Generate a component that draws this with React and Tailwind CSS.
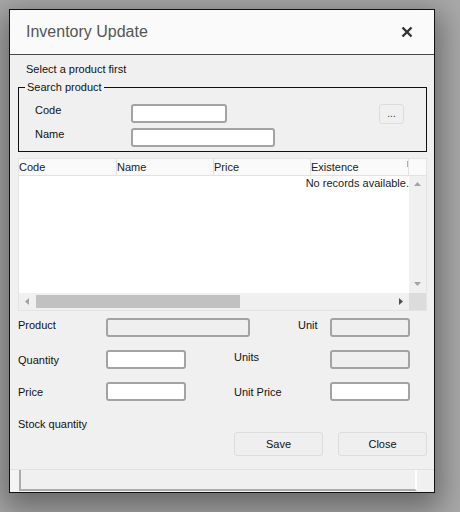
const inputBase = "h-[19px] border-2 border-[#a3a3a3] rounded-[3px]";

const Field = ({ width, disabled }) => (
  <div
    className={`${inputBase} ${width} ${disabled ? "bg-[#efefef]" : "bg-white"}`}
  />
);

const columns = [
  { name: "Code", w: "w-[98px]" },
  { name: "Name", w: "w-[97px]" },
  { name: "Price", w: "w-[97px]" },
];

const Triangle = ({ dir, color }) => {
  const pts = {
    up: "0,4 3.5,0 7,4",
    down: "0,0 3.5,4 7,0",
    left: "4,0 0,3.5 4,7",
    right: "0,0 4,3.5 0,7",
  }[dir];
  const vertical = dir === "up" || dir === "down";
  return (
    <svg
      width={vertical ? 7 : 4}
      height={vertical ? 4 : 7}
      viewBox={vertical ? "0 0 7 4" : "0 0 4 7"}
    >
      <polygon points={pts} fill={color} />
    </svg>
  );
};

const ProductGrid = () => (
  <div className="mt-[6px] w-[409px] border border-[#e4e4e4] bg-[#f0f0f0]">
    <div className="flex h-[17px] border-b border-[#e2e2e2] bg-[#fafafa] text-[#222]">
      {columns.map((c) => (
        <div
          key={c.name}
          className={`${c.w} h-full border-r border-[#e2e2e2] leading-[16px]`}
        >
          {c.name}
        </div>
      ))}
      <div className="relative w-[98px] h-full border-r border-[#e2e2e2] leading-[16px]">
        Existence
        <span className="absolute right-0 top-[2px] h-[6px] w-px bg-[#f5a623]" />
      </div>
      <div className="w-[17px] h-full" />
    </div>
    <div className="flex h-[117px]">
      <div className="w-[390px] bg-white text-right leading-[14px] text-[#222]">
        No records available.
      </div>
      <div className="w-[17px] flex flex-col items-center justify-between pt-[6px] pb-[7px] bg-[#f0f0f0]">
        <Triangle dir="up" color="#a3a3a3" />
        <Triangle dir="down" color="#a3a3a3" />
      </div>
    </div>
    <div className="flex h-[17px]">
      <div className="w-[390px] flex items-center bg-[#f0f0f0]">
        <div className="ml-[6px] mr-[7px]">
          <Triangle dir="left" color="#a3a3a3" />
        </div>
        <div className="h-[13px] w-[204px] bg-[#c1c1c1]" />
        <div className="ml-auto mr-[6px]">
          <Triangle dir="right" color="#505050" />
        </div>
      </div>
      <div className="w-[17px] bg-[#dcdcdc]" />
    </div>
  </div>
);

export default function App() {
  return (
    <div className="min-h-[512px] bg-[#a9a9a9] pt-[9px] pl-[9px] font-['Liberation_Sans',Arial,sans-serif] text-[11px] text-[#111]">
      <div className="w-[426px] h-[484px] flex flex-col border border-[#111] bg-[#f0f0f0] shadow-[0_10px_28px_6px_rgba(0,0,0,0.38)]">
        <div className="h-[45px] flex items-center justify-between border-b border-[#4a4a4a] bg-[#fafafa] pl-[16px] pr-[21px]">
          <span className="text-[16px] text-[#555]">Inventory Update</span>
          <svg width="12" height="12" viewBox="0 0 12 12" className="-mt-[1px]">
            <path
              d="M1.5 1.5 L10.5 10.5 M10.5 1.5 L1.5 10.5"
              stroke="#333"
              strokeWidth="2.4"
            />
          </svg>
        </div>

        <div className="flex-1 pl-[8px] pt-[7px]">
          <div className="pl-[8px] leading-[14px]">Select a product first</div>

          <fieldset className="mt-[4px] w-[409px] border border-[#111]">
            <legend className="ml-[6px] px-[2px] leading-[14px]">
              Search product
            </legend>
            <div className="pt-[10px] pb-[4px]">
              <div className="flex items-start">
                <span className="ml-[16px] w-[96px] leading-[13px]">Code</span>
                <Field width="w-[96px]" />
                <button className="ml-auto mr-[22px] h-[20px] w-[25px] rounded-[3px] border border-[#dcdcdc] bg-[#f0f0f0] text-[10px] leading-[18px] text-[#333]">
                  ...
                </button>
              </div>
              <div className="mt-[4px] flex items-start">
                <span className="ml-[16px] w-[96px] leading-[13px]">Name</span>
                <Field width="w-[144px]" />
              </div>
            </div>
          </fieldset>

          <ProductGrid />

          <div className="mt-[7px] w-[409px]">
            <div className="flex items-start">
              <span className="w-[88px] leading-[14px]">Product</span>
              <Field width="w-[144px]" disabled />
              <span className="ml-[48px] w-[32px] leading-[14px]">Unit</span>
              <Field width="w-[80px]" disabled />
            </div>
            <div className="mt-[13px] flex items-start">
              <span className="mt-[3px] w-[88px] leading-[14px]">Quantity</span>
              <Field width="w-[80px]" />
              <span className="ml-[48px] w-[96px] leading-[14px]">Units</span>
              <Field width="w-[80px]" disabled />
            </div>
            <div className="mt-[13px] flex items-start">
              <span className="mt-[3px] w-[88px] leading-[14px]">Price</span>
              <Field width="w-[80px]" />
              <span className="mt-[3px] ml-[48px] w-[96px] leading-[14px]">Unit Price</span>
              <Field width="w-[80px]" />
            </div>
            <div className="mt-[16px] leading-[14px]">Stock quantity</div>
            <div className="mt-[1px] flex justify-end gap-[15px]">
              <button className="h-[24px] w-[89px] rounded-[3px] border border-[#dcdcdc] bg-[#efefef] text-[11px]">
                Save
              </button>
              <button className="h-[24px] w-[89px] rounded-[3px] border border-[#dcdcdc] bg-[#efefef] text-[11px]">
                Close
              </button>
            </div>
          </div>
        </div>

        <div className="h-[23px] flex border-t border-[#e2e2e2]">
          <div className="w-[9px] bg-[#f4f4f4]" />
          <div className="w-[398px] mb-[1px] border-l-2 border-b-2 border-r-2 border-l-[#ababab] border-b-[#ababab] border-r-white bg-[#f0f0f0]" />
        </div>
      </div>
    </div>
  );
}
